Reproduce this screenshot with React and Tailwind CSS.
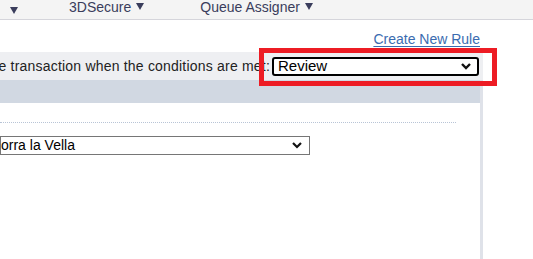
import React from 'react';

const Caret = () => (
    <svg width="8" height="7" viewBox="0 0 8 7" className="inline-block ml-[5px] mb-[1px]">
        <polygon points="0,0 8,0 4,7" fill="currentColor" />
    </svg>
);

const Chevron = ({ bold }) => (
    <svg width="10" height="7" viewBox="0 0 10 7" className="shrink-0">
        <polyline points="1,1 5,5 9,1" fill="none" stroke="#111" strokeWidth={bold ? 2.4 : 2.2} />
    </svg>
);

const App = () => {
    const navItems = [
        { label: '', pad: 'ml-[0px]' },
        { label: '3DSecure', pad: 'ml-[51px]' },
        { label: 'Queue Assigner', pad: 'ml-[56px]' },
    ];

    return (
        <div className="relative w-[533px] h-[259px] overflow-hidden bg-white text-[14px] text-[#222] font-['Liberation_Sans',Arial,sans-serif]">
            <nav className="h-[20px] bg-[#f4f4f4] border-b border-[#d5d5db] flex items-end pb-[4px] pl-[5px] text-[#3a3d5c] leading-[16px]">
                {navItems.map((item) => (
                    <span key={item.label} className={`whitespace-nowrap flex items-center ${item.pad}`}>
                        {item.label}
                        <Caret />
                    </span>
                ))}
            </nav>

            <div className="w-[480px] flex justify-end pt-[11px] pb-[5px] leading-[16px]">
                <a href="#" className="text-[#3b6cb0] underline underline-offset-2">Create New Rule</a>
            </div>

            <div className="w-[483px] h-[28px] bg-[#eeeff2] flex items-center">
                <div className="w-[270px] overflow-hidden flex justify-end whitespace-nowrap tracking-[0.2px]">
                    <span>Mark the transaction when the conditions are met:</span>
                </div>
                <div className="ml-[2px] w-[207px] h-[19px] border-2 border-black rounded-[3px] bg-white flex items-center justify-between pl-[4px] pr-[6px] text-[15px] text-black">
                    <span>Review</span>
                    <Chevron bold />
                </div>
            </div>

            <div className="w-[483px] h-[200px] border-r-[3px] border-[#dfe2e9]">
                <div className="h-[23px] bg-[#d1d8e2]" />
                <div className="mt-[19px] w-[456px] border-t border-dotted border-[#b8c4d6]" />
                <div className="mt-[13px] w-[310px] h-[19px] border border-[#767676] bg-white flex items-center justify-between pr-[7px] text-black">
                    <span className="whitespace-nowrap">orra la Vella</span>
                    <Chevron />
                </div>
            </div>

            <div className="absolute left-[259px] top-[48px] w-[238px] h-[38px] border-[5px] border-[#ed1c24]" />
        </div>
    );
};

export default App;
